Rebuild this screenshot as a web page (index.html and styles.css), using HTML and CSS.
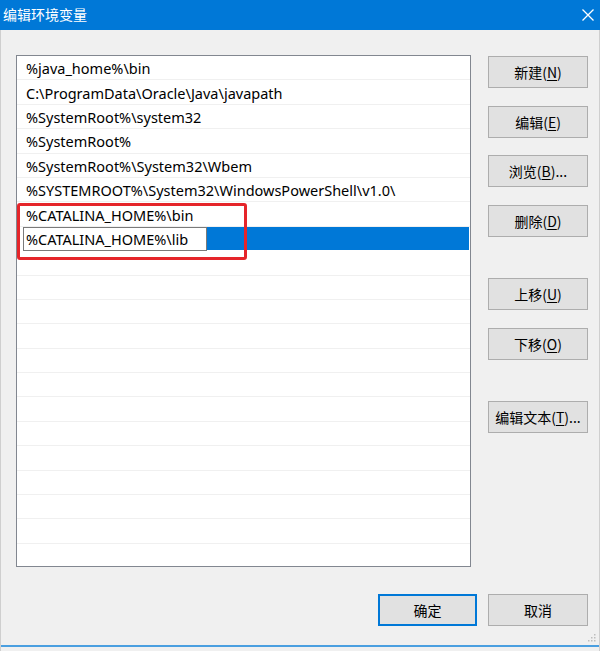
FILE: index.html
```html
<!DOCTYPE html>
<html lang="zh-CN">
<head>
<meta charset="utf-8">
<title>编辑环境变量</title>
<link rel="stylesheet" href="styles.css">
</head>
<body>
<div class="window">
  <div class="titlebar">
    <span class="title">编辑环境变量</span>
    <svg class="close" width="12" height="12" viewBox="0 0 12 12"><path d="M0.5 0.5 L11.5 11.5 M11.5 0.5 L0.5 11.5" stroke="#fff" stroke-width="1.3" fill="none"/></svg>
  </div>
  <div class="content">
    <div class="main">
      <div class="list">
        <div class="row"><span class="cell">%java_home%\bin</span></div>
        <div class="row"><span class="cell">C:\ProgramData\Oracle\Java\javapath</span></div>
        <div class="row"><span class="cell">%SystemRoot%\system32</span></div>
        <div class="row"><span class="cell">%SystemRoot%</span></div>
        <div class="row"><span class="cell">%SystemRoot%\System32\Wbem</span></div>
        <div class="row"><span class="cell">%SYSTEMROOT%\System32\WindowsPowerShell\v1.0\</span></div>
        <div class="row"><span class="cell">%CATALINA_HOME%\bin</span></div>
        <div class="row selected">
          <span class="editbox">%CATALINA_HOME%\lib</span>
          <span class="highlight"></span>
        </div>
        <div class="row"></div>
        <div class="row"></div>
        <div class="row"></div>
        <div class="row"></div>
        <div class="row"></div>
        <div class="row"></div>
        <div class="row"></div>
        <div class="row"></div>
        <div class="row"></div>
        <div class="row"></div>
        <div class="row"></div>
        <div class="row"></div>
        <div class="row"></div>
        <div class="callout"></div>
      </div>
      <div class="side">
        <button class="btn">新建(<u>N</u>)</button>
        <button class="btn">编辑(<u>E</u>)</button>
        <button class="btn">浏览(<u>B</u>)...</button>
        <button class="btn">删除(<u>D</u>)</button>
        <button class="btn group">上移(<u>U</u>)</button>
        <button class="btn">下移(<u>O</u>)</button>
        <button class="btn group">编辑文本(<u>T</u>)...</button>
      </div>
    </div>
    <div class="footer">
      <button class="btn default">确定</button>
      <button class="btn">取消</button>
    </div>
  </div>
  <svg class="grip" width="8" height="8" viewBox="0 0 8 8">
    <rect x="6" y="0" width="1.5" height="1.5" fill="#bdbdbd"/>
    <rect x="3" y="3" width="1.5" height="1.5" fill="#bdbdbd"/>
    <rect x="6" y="3" width="1.5" height="1.5" fill="#bdbdbd"/>
    <rect x="0" y="6" width="1.5" height="1.5" fill="#bdbdbd"/>
    <rect x="3" y="6" width="1.5" height="1.5" fill="#bdbdbd"/>
    <rect x="6" y="6" width="1.5" height="1.5" fill="#bdbdbd"/>
  </svg>
  <div class="bottomline"></div>
</div>
</body>
</html>
```
FILE: styles.css
```css
* { box-sizing: border-box; }
html, body {
  margin: 0;
  padding: 0;
  background: #f0f0f0;
}
body {
  width: 600px;
  height: 651px;
  overflow: hidden;
  font-family: "Noto Sans", "Noto Sans CJK SC", sans-serif;
  font-size: 14.5px;
  color: #000;
}
.window {
  position: relative;
  width: 600px;
  height: 651px;
  border-left: 1px solid #cfcfcf;
  border-right: 1px solid #cfcfcf;
  background: #f0f0f0;
}
.titlebar {
  height: 30px;
  background: #0078d7;
  display: flex;
  align-items: center;
  justify-content: space-between;
  padding: 0 6px 3px 3px;
  margin: 0 -1px;
}
.title {
  color: #fff;
  font-family: "Noto Sans CJK SC", sans-serif;
  font-size: 14px;
  line-height: 1;
}
.close {
  margin-top: 2px;
}
.content {
  padding: 25px 11px 0 15px;
}
.main {
  display: flex;
  gap: 17px;
  height: 512px;
}
.list {
  position: relative;
  width: 455px;
  height: 512px;
  background: #fff;
  border: 1px solid #828790;
  overflow: hidden;
}
.row {
  height: 24.4px;
  border-bottom: 1px solid #f0f0f0;
  display: flex;
  align-items: center;
}
.cell {
  padding-left: 9px;
  padding-top: 1px;
  white-space: nowrap;
}
.row.selected {
  align-items: stretch;
  border-bottom: none;
  padding-left: 6px;
  padding-right: 1px;
}
.editbox {
  width: 184px;
  background: #fff;
  border: 1px solid #7a7a7a;
  padding-left: 2px;
  padding-top: 1px;
  display: flex;
  align-items: center;
  white-space: nowrap;
}
.highlight {
  flex: 1;
  background: #0078d7;
  margin: 0 0 1px 0;
}
.callout {
  position: absolute;
  left: 0;
  top: 147px;
  width: 230px;
  height: 57px;
  border: 3px solid #e5252a;
  border-radius: 3px;
}
.side {
  display: flex;
  flex-direction: column;
  gap: 17.5px;
  padding-top: 1px;
}
.btn {
  width: 100px;
  height: 32px;
  background: #e1e1e1;
  border: 1px solid #adadad;
  font-family: "Noto Sans CJK SC", sans-serif;
  font-size: 14px;
  color: #000;
  padding: 0;
  margin: 0;
  line-height: 1;
}
.btn u { text-underline-offset: 2px; }
.btn.group { margin-top: 24px; }
.footer {
  display: flex;
  justify-content: flex-end;
  gap: 11px;
  margin-top: 27px;
}
.btn.default {
  width: 99px;
  border: 2px solid #0078d7;
}
.grip {
  position: absolute;
  right: 3px;
  bottom: 9px;
}
.bottomline {
  position: absolute;
  left: 0;
  right: 0;
  bottom: 4px;
  height: 2px;
  background: #4a9fe0;
}
```
